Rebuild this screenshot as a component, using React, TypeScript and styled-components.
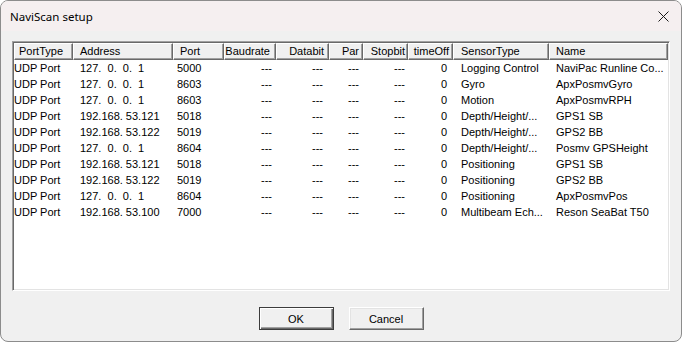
import { createGlobalStyle, styled } from "styled-components";

type Column = {
  title: string;
  width: number;
  align: "left" | "right";
  headPad: number;
  cellPad: number;
};

const columns: Column[] = [
  { title: "PortType", width: 59, align: "left", headPad: 5, cellPad: 0 },
  { title: "Address", width: 100, align: "left", headPad: 7, cellPad: 7 },
  { title: "Port", width: 51, align: "left", headPad: 7, cellPad: 4 },
  { title: "Baudrate", width: 52, align: "right", headPad: 6, cellPad: 4 },
  { title: "Databit", width: 53, align: "right", headPad: 5, cellPad: 6 },
  { title: "Par", width: 34, align: "right", headPad: 4, cellPad: 4 },
  { title: "Stopbit", width: 45, align: "right", headPad: 3, cellPad: 3 },
  { title: "timeOff", width: 45, align: "right", headPad: 4, cellPad: 6 },
  { title: "SensorType", width: 96, align: "left", headPad: 8, cellPad: 8 },
  { title: "Name", width: 119, align: "left", headPad: 7, cellPad: 7 },
];

const LOCAL = "127.  0.  0.  1";

const rows: string[][] = [
  ["UDP Port", LOCAL, "5000", "---", "---", "---", "---", "0", "Logging Control", "NaviPac Runline Co..."],
  ["UDP Port", LOCAL, "8603", "---", "---", "---", "---", "0", "Gyro", "ApxPosmvGyro"],
  ["UDP Port", LOCAL, "8603", "---", "---", "---", "---", "0", "Motion", "ApxPosmvRPH"],
  ["UDP Port", "192.168. 53.121", "5018", "---", "---", "---", "---", "0", "Depth/Height/...", "GPS1 SB"],
  ["UDP Port", "192.168. 53.122", "5019", "---", "---", "---", "---", "0", "Depth/Height/...", "GPS2 BB"],
  ["UDP Port", LOCAL, "8604", "---", "---", "---", "---", "0", "Depth/Height/...", "Posmv GPSHeight"],
  ["UDP Port", "192.168. 53.121", "5018", "---", "---", "---", "---", "0", "Positioning", "GPS1 SB"],
  ["UDP Port", "192.168. 53.122", "5019", "---", "---", "---", "---", "0", "Positioning", "GPS2 BB"],
  ["UDP Port", LOCAL, "8604", "---", "---", "---", "---", "0", "Positioning", "ApxPosmvPos"],
  ["UDP Port", "192.168. 53.100", "7000", "---", "---", "---", "---", "0", "Multibeam Ech...", "Reson SeaBat T50"],
];

const template = columns.map((c) => `${c.width}px`).join(" ");

const App = () => {
  return (
    <>
      <GlobalStyle />
      <Window>
        <TitleBar>
          <Title>NaviScan setup</Title>
          <CloseButton aria-label="Close">
            <svg width="11" height="11" viewBox="0 0 11 11">
              <path d="M0.5 0.5 L10.5 10.5 M10.5 0.5 L0.5 10.5" stroke="#1a1a1a" strokeWidth="1" fill="none" />
            </svg>
          </CloseButton>
        </TitleBar>
        <Body>
          <ListBox>
            <HeaderRow>
              {columns.map((c) => (
                <HeaderCell key={c.title} $align={c.align} $pad={c.headPad}>
                  {c.title}
                </HeaderCell>
              ))}
            </HeaderRow>
            {rows.map((row, i) => (
              <Row key={i}>
                {row.map((value, j) => (
                  <Cell key={j} $align={columns[j].align} $pad={columns[j].cellPad}>
                    {value}
                  </Cell>
                ))}
              </Row>
            ))}
          </ListBox>
          <ButtonRow>
            <Button $default>OK</Button>
            <Button>Cancel</Button>
          </ButtonRow>
        </Body>
      </Window>
    </>
  );
};

export default App;

const GlobalStyle = createGlobalStyle`
  html, body {
    margin: 0;
    padding: 0;
    background: #ffffff;
  }
  * {
    box-sizing: border-box;
  }
`;

const Window = styled.div`
  width: 682px;
  height: 342px;
  border: 1px solid #8c8c8c;
  border-radius: 8px;
  background: #f0f0f0;
  overflow: hidden;
  display: flex;
  flex-direction: column;
  font-family: "Liberation Sans", Arial, sans-serif;
  font-size: 11px;
  color: #000;
`;

const TitleBar = styled.div`
  height: 30px;
  background: #f5eff0;
  display: flex;
  align-items: center;
  justify-content: space-between;
  padding: 0 12px 0 9px;
`;

const Title = styled.span`
  font-family: "Noto Sans", "Open Sans", sans-serif;
  font-size: 11.5px;
  color: #000;
`;

const CloseButton = styled.div`
  width: 11px;
  height: 11px;
  display: flex;
`;

const Body = styled.div`
  flex: 1;
  display: flex;
  flex-direction: column;
  padding: 10px 11px 0 11px;
`;

const ListBox = styled.div`
  height: 250px;
  background: #ffffff;
  border: 1px solid;
  border-color: #a0a0a0 #ffffff #ffffff #a0a0a0;
  box-shadow: inset 1px 1px 0 #696969, inset -1px -1px 0 #e3e3e3;
  padding: 1px;
  display: flex;
  flex-direction: column;
  overflow: hidden;
`;

const HeaderRow = styled.div`
  display: grid;
  grid-template-columns: ${template};
  height: 17px;
  flex-shrink: 0;
`;

const HeaderCell = styled.div<{ $align: "left" | "right"; $pad: number }>`
  background: #f0f0f0;
  border-top: 1px solid #ffffff;
  border-left: 1px solid #ffffff;
  border-right: 1px solid #696969;
  border-bottom: 1px solid #696969;
  box-shadow: inset -1px -1px 0 #a0a0a0;
  line-height: 15px;
  white-space: nowrap;
  overflow: hidden;
  text-align: ${(p) => p.$align};
  padding: ${(p) => (p.$align === "left" ? `0 0 0 ${p.$pad - 1}px` : `0 ${p.$pad - 1}px 0 0`)};
`;

const Row = styled.div`
  display: grid;
  grid-template-columns: ${template};
  height: 16px;
  flex-shrink: 0;
`;

const Cell = styled.div<{ $align: "left" | "right"; $pad: number }>`
  line-height: 16px;
  white-space: pre;
  overflow: hidden;
  text-align: ${(p) => p.$align};
  padding: ${(p) => (p.$align === "left" ? `0 0 0 ${p.$pad}px` : `0 ${p.$pad}px 0 0`)};
`;

const ButtonRow = styled.div`
  display: flex;
  justify-content: center;
  gap: 15px;
  margin-top: 16px;
`;

const Button = styled.button<{ $default?: boolean }>`
  width: 75px;
  height: 23px;
  padding: 0;
  font-family: "Liberation Sans", Arial, sans-serif;
  font-size: 11px;
  color: #000;
  background: #f0f0f0;
  border: 1px solid;
  border-color: ${(p) => (p.$default ? "#3c3c3c" : "#ffffff #696969 #696969 #ffffff")};
  box-shadow: ${(p) =>
    p.$default
      ? "inset 1px 1px 0 #ffffff, inset -1px -1px 0 #696969, inset -2px -2px 0 #a0a0a0"
      : "inset -1px -1px 0 #a0a0a0, inset 1px 1px 0 #e3e3e3"};
`;
